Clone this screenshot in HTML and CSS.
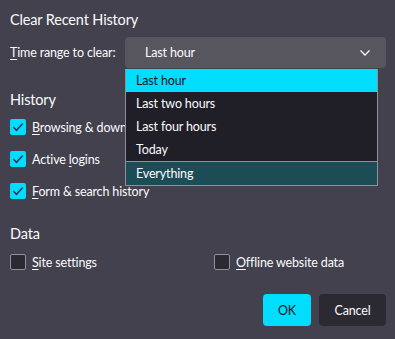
FILE: index.html
```html
<!DOCTYPE html>
<html lang="en">
<head>
<meta charset="utf-8">
<title>Clear Recent History</title>
<link rel="stylesheet" href="styles.css">
</head>
<body>
<div class="dialog">
  <h1 class="title">Clear Recent History</h1>
  <div class="range-row">
    <span class="range-label"><u>T</u>ime range to clear:</span>
    <div class="select">
      <span class="select-value">Last hour</span>
      <svg class="chevron" width="12" height="8" viewBox="0 0 12 8"><path d="M1.5 1.5 L6 6 L10.5 1.5" fill="none" stroke="#fbfbfe" stroke-width="1.3"/></svg>
    </div>
  </div>

  <h2 class="section">History</h2>
  <div class="check-list">
    <label class="check-row"><span class="box checked"><svg width="16" height="16" viewBox="0 0 16 16"><path d="M3.2 8 L6.5 11.3 L12.8 4.6" fill="none" stroke="#1e3a4c" stroke-width="1.5"/></svg></span><span class="nowrap"><u>B</u>rowsing &amp; download history</span></label>
    <label class="check-row"><span class="box checked"><svg width="16" height="16" viewBox="0 0 16 16"><path d="M3.2 8 L6.5 11.3 L12.8 4.6" fill="none" stroke="#1e3a4c" stroke-width="1.5"/></svg></span><span>Active <u>l</u>ogins</span></label>
    <label class="check-row"><span class="box checked"><svg width="16" height="16" viewBox="0 0 16 16"><path d="M3.2 8 L6.5 11.3 L12.8 4.6" fill="none" stroke="#1e3a4c" stroke-width="1.5"/></svg></span><span><u>F</u>orm &amp; search history</span></label>
  </div>

  <h2 class="section data">Data</h2>
  <div class="data-row">
    <label class="check-row"><span class="box"></span><span><u>S</u>ite settings</span></label>
    <label class="check-row"><span class="box"></span><span><u>O</u>ffline website data</span></label>
  </div>

  <div class="buttons">
    <button class="btn primary">OK</button>
    <button class="btn">Cancel</button>
  </div>

  <ul class="popup">
    <li class="item selected">Last hour</li>
    <li class="item">Last two hours</li>
    <li class="item">Last four hours</li>
    <li class="item">Today</li>
    <li class="item focused">Everything</li>
  </ul>
</div>
</body>
</html>
```

FILE: styles.css
```css
html, body {
  margin: 0;
  padding: 0;
}
body {
  background: #42414d;
  color: #fbfbfe;
  font-family: Lato, "Noto Sans", sans-serif;
  font-size: 12.5px;
  letter-spacing: -0.15px;
  width: 395px;
  height: 339px;
  overflow: hidden;
}
.dialog {
  position: relative;
  padding: 0 9px 0 10px;
}
u {
  text-decoration: underline;
  text-underline-offset: 2px;
}
.title {
  margin: 0;
  padding-top: 10px;
  font-size: 14.5px;
  font-weight: 400;
  line-height: 20px;
}
.range-row {
  display: flex;
  align-items: center;
  margin-top: 7px;
  height: 31px;
}
.range-label {
  width: 115px;
  flex: none;
  white-space: nowrap;
}
.select {
  flex: 1;
  height: 31px;
  background: #57565f;
  border-radius: 4px;
  display: flex;
  align-items: center;
  padding: 0 15px 0 20px;
}
.select-value {
  flex: 1;
}
.chevron {
  display: block;
}
.section {
  margin: 22px 0 0;
  font-size: 14.5px;
  font-weight: 400;
  line-height: 20px;
}
.section.data {
  margin-top: 17px;
}
.check-list {
  margin-top: 1px;
}
.check-row {
  display: flex;
  align-items: center;
  gap: 6px;
  height: 32px;
}
.nowrap {
  white-space: nowrap;
}
.box {
  width: 16px;
  height: 16px;
  box-sizing: border-box;
  border-radius: 2px;
  background: #2b2a33;
  border: 1px solid #8f8f9d;
  flex: none;
}
.box.checked {
  background: #00ddff;
  border: none;
}
.box svg {
  display: block;
}
.data-row {
  display: grid;
  grid-template-columns: 204px 1fr;
  margin-top: 2px;
}
.buttons {
  display: flex;
  justify-content: flex-end;
  gap: 8px;
  margin-top: 16px;
}
.btn {
  height: 32px;
  border: none;
  border-radius: 4px;
  font-family: inherit;
  font-size: 12.5px;
  letter-spacing: -0.15px;
  background: #2b2a33;
  color: #fbfbfe;
  padding: 0;
  width: 67px;
}
.btn.primary {
  background: #00ddff;
  color: #15141a;
  width: 48px;
}
.popup {
  position: absolute;
  left: 125px;
  top: 69px;
  width: 253px;
  box-sizing: border-box;
  margin: 0;
  padding: 0;
  list-style: none;
  background: #201f27;
  border: 1px solid #8f8f9d;
  border-top: none;
}
.item {
  height: 23px;
  line-height: 23px;
  padding-left: 10px;
}
.item.selected {
  background: #00ddff;
  color: #15141a;
}
.item.focused {
  background: #1c4d57;
  border-top: 1px solid #8f8f9d;
}
```
